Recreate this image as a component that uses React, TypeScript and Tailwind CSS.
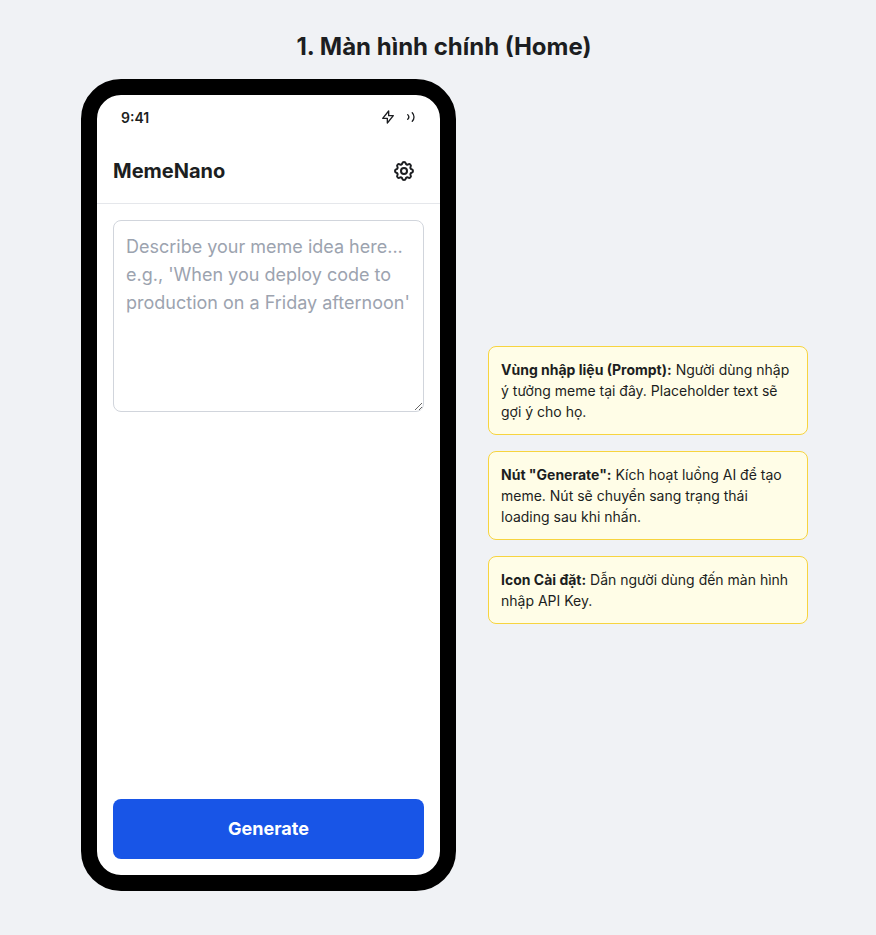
export default function App() {
  return (
    <main className="min-h-[935px] bg-[#f0f2f5] pl-3 pt-8 font-['Inter',sans-serif] text-[#1c1e21]">
      <h1 className="mb-[17px] text-center text-2xl leading-[30px] font-bold">1. Màn hình chính (Home)</h1>
      <div className="ml-[69px] flex items-center gap-8">
        <section className="flex h-[812px] w-[375px] shrink-0 flex-col overflow-hidden rounded-[40px] border-16 border-black bg-white">
          <div className="flex h-[44px] items-center justify-between px-6 text-sm font-semibold">
            <span className="pt-0.5">9:41</span>
            <div className="flex items-center gap-1">
              <svg className="size-4" viewBox="0 0 24 24" fill="none" stroke="currentColor" strokeWidth="2" strokeLinecap="round" strokeLinejoin="round"><path d="M13 10V3L4 14h7v7l9-11h-7z" /></svg>
              <svg className="size-4" viewBox="0 0 24 24" fill="none" stroke="currentColor" strokeWidth="2" strokeLinecap="round"><path d="M18.364 5.636a9 9 0 0 1 0 12.728M11.54 8.46a5 5 0 0 1 0 7.07" /></svg>
            </div>
          </div>
          <header className="flex h-[65px] items-center justify-between border-b border-gray-200 px-4">
            <h2 className="text-xl font-bold">MemeNano</h2>
            <button aria-label="Cài đặt" className="p-2">
              <svg className="size-6" viewBox="0 0 24 24" fill="none" stroke="currentColor" strokeWidth="2" strokeLinecap="round" strokeLinejoin="round"><path d="M10.325 4.317c.426-1.756 2.924-1.756 3.35 0a1.724 1.724 0 0 0 2.573 1.066c1.543-.94 3.31.826 2.37 2.37a1.724 1.724 0 0 0 1.065 2.572c1.756.426 1.756 2.924 0 3.35a1.724 1.724 0 0 0-1.066 2.573c.94 1.543-.826 3.31-2.37 2.37a1.724 1.724 0 0 0-2.572 1.065c-.426 1.756-2.924 1.756-3.35 0a1.724 1.724 0 0 0-2.573-1.066c-1.543.94-3.31-.826-2.37-2.37a1.724 1.724 0 0 0-1.065-2.572c-1.756-.426-1.756-2.924 0-3.35a1.724 1.724 0 0 0 1.066-2.573c-.94-1.543.826-3.31 2.37-2.37.996.608 2.296.07 2.572-1.065z" /><circle cx="12" cy="12" r="3" /></svg>
            </button>
          </header>
          <div className="flex flex-1 flex-col justify-between p-4">
            <textarea className="h-48 w-full rounded-lg border border-gray-300 p-3 text-lg leading-7 placeholder:text-[#9ca3af]" placeholder="Describe your meme idea here... e.g., 'When you deploy code to production on a Friday afternoon'" />
            <button className="h-[60px] rounded-lg bg-[#1855e7] text-lg font-bold text-white">Generate</button>
          </div>
        </section>
        <aside className="flex w-80 flex-col gap-4 text-sm leading-[21px]">
          <p className="rounded-lg border border-[#f7d43f] bg-[#fffde7] px-3 py-3"><strong>Vùng nhập liệu (Prompt):</strong> Người dùng nhập ý tưởng meme tại đây. Placeholder text sẽ gợi ý cho họ.</p>
          <p className="rounded-lg border border-[#f7d43f] bg-[#fffde7] px-3 py-3"><strong>Nút "Generate":</strong> Kích hoạt luồng AI để tạo meme. Nút sẽ chuyển sang trạng thái loading sau khi nhấn.</p>
          <p className="rounded-lg border border-[#f7d43f] bg-[#fffde7] px-3 py-3"><strong>Icon Cài đặt:</strong> Dẫn người dùng đến màn hình nhập API Key.</p>
        </aside>
      </div>
    </main>
  );
}
